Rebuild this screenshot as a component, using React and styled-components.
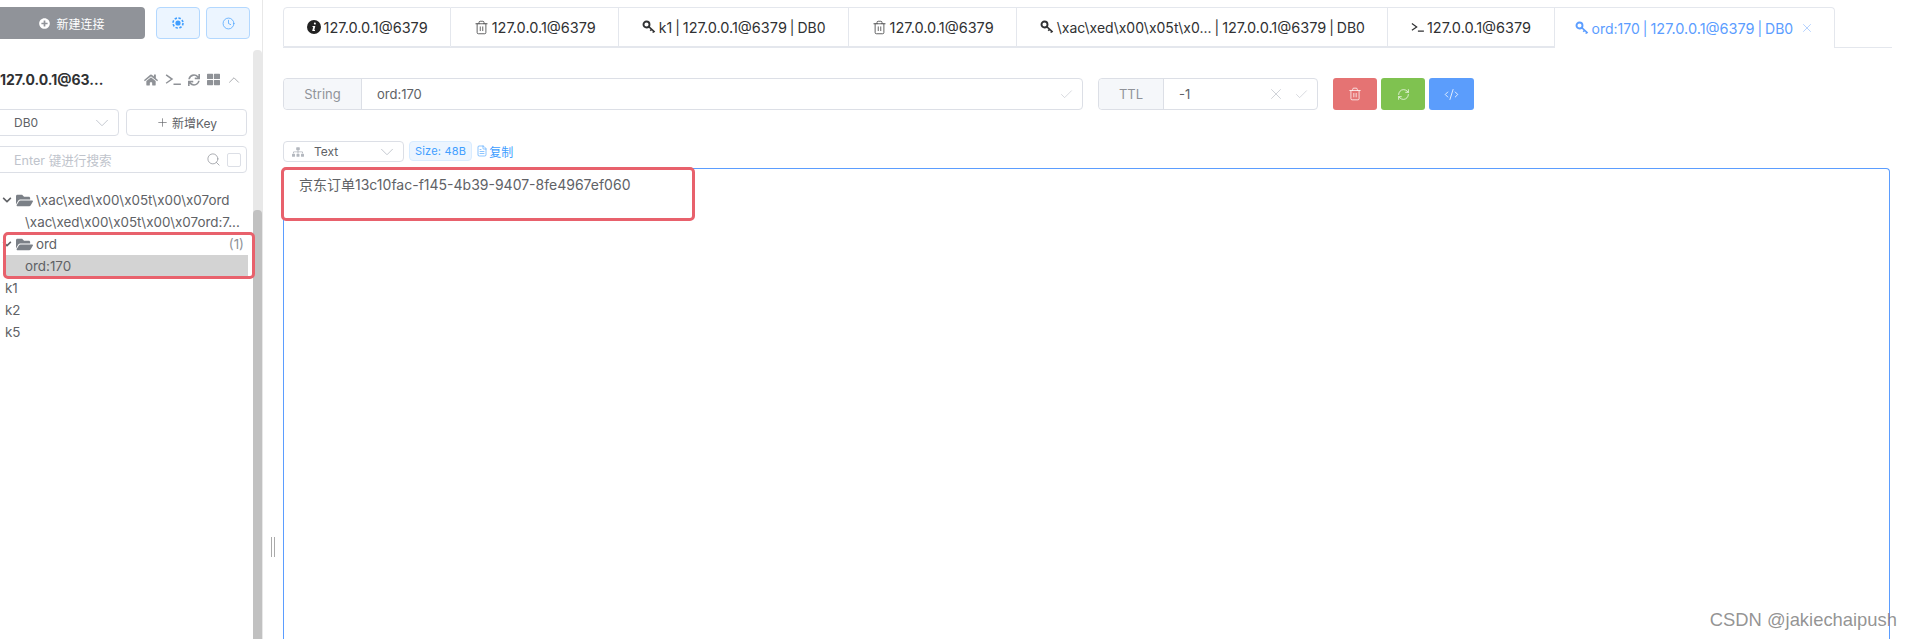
import React from 'react';
import styled, { createGlobalStyle } from 'styled-components';
import {
  FaHome, FaSync, FaThLarge, FaFolderOpen, FaChevronDown, FaPlusCircle, FaSitemap,
} from 'react-icons/fa';
import {
  Trash2, RefreshCw, Clock, ChevronDown, ChevronUp, Plus, Search, Check, X, CodeXml, FileText,
} from 'lucide-react';

const ADDRESS = '127.0.0.1@6379';

const GlobalStyle = createGlobalStyle`
  html, body {
    margin: 0;
    height: 100%;
    overflow: hidden;
    background: #fff;
  }
  #root {
    height: 100%;
  }
  * {
    box-sizing: border-box;
  }
`;

const Page = styled.div`
  position: relative;
  display: flex;
  height: 639px;
  overflow: hidden;
  font-family: Inter, "Noto Sans CJK SC", sans-serif;
  font-size: 13px;
  color: #606266;
`;

const Sidebar = styled.aside`
  width: 263px;
  flex: none;
  display: flex;
  flex-direction: column;
  border-right: 1px solid #e8e8e8;
`;

const TopButtons = styled.div`
  display: flex;
  gap: 6px;
  height: 50px;
  padding: 7px 0 0 0;
  margin-left: -10px;
`;

const NewConnection = styled.div`
  width: 155px;
  height: 32px;
  margin-right: 5px;
  padding-left: 9px;
  display: flex;
  align-items: center;
  justify-content: center;
  gap: 6px;
  border-radius: 4px;
  background: #909399;
  color: #fff;
  font-size: 12px;
`;

const LightButton = styled.div`
  width: 44px;
  height: 32px;
  display: flex;
  align-items: center;
  justify-content: center;
  border: 1px solid #b3d8ff;
  border-radius: 4px;
  background: #ecf5ff;
  color: #409eff;
`;

const SideBody = styled.div`
  flex: 1;
  min-height: 0;
  display: flex;
`;

const SideContent = styled.div`
  width: 253px;
  flex: none;
`;

const ScrollTrack = styled.div`
  width: 9px;
  flex: none;
  padding-top: 160px;
  background: #e8e8e8;
  border-radius: 4px 4px 0 0;
`;

const ScrollThumb = styled.div`
  height: 100%;
  background: #c1c1c1;
  border-radius: 4px 4px 0 0;
`;

const ConnectionRow = styled.div`
  height: 59px;
  display: flex;
  align-items: center;
  justify-content: space-between;
  padding-right: 10px;
`;

const ConnectionName = styled.div`
  font-size: 14px;
  font-weight: 700;
  color: #303133;
`;

const ConnectionIcons = styled.div`
  display: flex;
  align-items: center;
  gap: 7px;
  color: #8f9297;
`;

const CollapseIcon = styled(ChevronUp)`
  margin-left: -2px;
`;

const KeyToolbar = styled.div`
  display: flex;
  gap: 7px;
  padding-right: 6px;
`;

const DbSelect = styled.div`
  width: 129px;
  height: 27px;
  margin-left: -10px;
  padding: 0 5px 0 23px;
  display: flex;
  align-items: center;
  justify-content: space-between;
  border: 1px solid #dcdfe6;
  border-radius: 4px;
  font-size: 12px;
  color: #606266;
`;

const NewKey = styled.div`
  flex: 1;
  height: 27px;
  display: flex;
  align-items: center;
  justify-content: center;
  gap: 3px;
  border: 1px solid #dcdfe6;
  border-radius: 4px;
  font-size: 12px;
`;

const SearchBox = styled.div`
  height: 27px;
  margin: 10px 6px 0 -10px;
  padding: 0 5px 0 23px;
  display: flex;
  align-items: center;
  gap: 6px;
  border: 1px solid #dcdfe6;
  border-radius: 4px;
  font-size: 12.6px;
  color: #c0c4cc;
`;

const SearchHint = styled.span`
  flex: 1;
`;

const SearchCheck = styled.span`
  width: 14px;
  height: 14px;
  border: 1px solid #dcdfe6;
  border-radius: 2px;
`;

const Tree = styled.div`
  margin-top: 16px;
  font-size: 13.4px;
`;

const AnnotatedGroup = styled.div`
  position: relative;
`;

const Annotation = styled.div`
  position: absolute;
  border: 3px solid #e8616c;
  border-radius: 5px;
  pointer-events: none;
  left: ${p => p.$left}px;
  top: ${p => p.$top}px;
  width: ${p => p.$width}px;
  height: ${p => p.$height}px;
`;

const TreeRow = styled.div`
  height: 22px;
  margin-right: 5px;
  display: flex;
  align-items: center;
  gap: 3.5px;
  white-space: nowrap;
  padding-left: ${p => p.$indent}px;
  background: ${p => (p.$selected ? '#d3d3d3' : 'transparent')};
  margin-left: ${p => (p.$selected ? 6 : 0)}px;
`;

const TreeCount = styled.span`
  margin-left: auto;
  padding-right: 4px;
  color: #909399;
`;

const Splitter = styled.div`
  width: 20px;
  flex: none;
  display: flex;
  align-items: flex-end;
  justify-content: flex-start;
  gap: 2px;
  padding: 0 0 82px 8px;
`;

const SplitBar = styled.span`
  width: 1px;
  height: 20px;
  background: #aaa;
`;

const Main = styled.main`
  flex: 1;
  min-width: 0;
  padding: 7px 17px 0 0;
  display: flex;
  flex-direction: column;
`;

const TabStrip = styled.div`
  height: 41px;
  flex: none;
  display: flex;
  border-bottom: 1px solid #e4e7ed;
`;

const Tab = styled.div`
  height: ${p => (p.$active ? 41 : 40)}px;
  padding: 0 ${p => (p.$active ? 20 : 22.5)}px;
  display: flex;
  align-items: center;
  gap: 3px;
  white-space: pre;
  border: 1px solid #e4e7ed;
  border-left: ${p => (p.$first ? '1px solid #e4e7ed' : 'none')};
  border-bottom: ${p => (p.$active ? 'none' : '1px solid #e4e7ed')};
  border-radius: ${p => (p.$first ? '4px 0 0 0' : p.$active ? '0 4px 0 0' : '0')};
  background: #fff;
  font-size: 14px;
  word-spacing: -1px;
  color: ${p => (p.$active ? '#5b9dff' : '#303133')};
`;

const TabAddress = styled.span`
  font-size: 14.5px;
`;

const TabClose = styled.span`
  margin-left: 4px;
  display: flex;
  color: #7fb2ff;
`;

const KeyRow = styled.div`
  margin-top: 30px;
  height: 32px;
  flex: none;
  display: flex;
`;

const FieldGroup = styled.div`
  display: flex;
  height: 32px;
  border: 1px solid #dcdfe6;
  border-radius: 4px;
  width: ${p => p.$width}px;
  margin-right: ${p => p.$gap}px;
`;

const FieldLabel = styled.div`
  width: ${p => p.$width}px;
  flex: none;
  display: flex;
  align-items: center;
  justify-content: center;
  background: #f5f7fa;
  border-right: 1px solid #dcdfe6;
  border-radius: 4px 0 0 4px;
  color: #909399;
`;

const FieldValue = styled.div`
  flex: 1;
  padding: 0 8px 0 15px;
  display: flex;
  align-items: center;
  gap: 9px;
`;

const FieldText = styled.span`
  flex: 1;
`;

const ActionButton = styled.div`
  width: ${p => p.$width || 44}px;
  height: 32px;
  margin-right: 4px;
  display: flex;
  align-items: center;
  justify-content: center;
  border-radius: 3px;
  background: ${p => p.$color};
  color: #fff;
`;

const FormatRow = styled.div`
  margin-top: 31px;
  height: 21px;
  flex: none;
  display: flex;
  align-items: flex-start;
`;

const FormatSelect = styled.div`
  width: 121px;
  height: 21px;
  padding: 0 5px 0 8px;
  display: flex;
  align-items: center;
  border: 1px solid #dcdfe6;
  border-radius: 4px;
  font-size: 12px;
`;

const FormatName = styled.span`
  flex: 1;
  padding-left: 10px;
`;

const SizeTag = styled.div`
  height: 20px;
  margin-left: 5px;
  padding: 0 5px;
  display: flex;
  align-items: center;
  border: 1px solid #d9ecff;
  border-radius: 4px;
  background: #ecf5ff;
  color: #409eff;
  font-size: 11px;
  letter-spacing: 0.2px;
`;

const CopyLink = styled.div`
  margin-left: 4px;
  height: 20px;
  display: flex;
  align-items: center;
  gap: 1px;
  color: #409eff;
  font-size: 12px;
`;

const Editor = styled.div`
  position: relative;
  flex: 1;
  margin: 6px 2px 0 0;
  padding: 7px 15px;
  border: 1px solid #5b9dff;
  border-bottom: none;
  border-radius: 4px 4px 0 0;
  font-size: 14px;
  line-height: 18px;
`;

const Watermark = styled.div`
  position: absolute;
  right: 12px;
  bottom: 8px;
  font-family: "Liberation Sans", sans-serif;
  font-size: 18.4px;
  color: rgba(120, 120, 120, 0.8);
`;

const PromptIcon = ({ width }) => (
  <svg width={width} height={width * 0.8} viewBox="0 0 16 13" fill="none" stroke="currentColor" strokeWidth="1.5">
    <path d="M1 2l6 4.2L1 10.4M8.5 11.5H16" />
  </svg>
);

const KeyIcon = () => (
  <svg width="14" height="14" viewBox="0 0 14 14" fill="none" stroke="currentColor">
    <circle cx="4.5" cy="4.5" r="3" strokeWidth="1.9" />
    <path d="M6.7 6.7l6 5.3M9.6 9.2l-1.3 1.6M11.8 11.1l-1 1.5" strokeWidth="1.6" />
  </svg>
);

const InfoIcon = () => (
  <svg width="14" height="14" viewBox="0 0 14 14">
    <circle cx="7" cy="7" r="7" fill="#222" />
    <path d="M7.9 2.6a1 1 0 1 1-.1 2 1 1 0 0 1 .1-2zM5.6 6h2.7l-1 4h.8l-.2.9H5.2l1-4h-.8z" fill="#fff" />
  </svg>
);

const TabLabel = ({ label }) => {
  const [before, after] = label.split(ADDRESS);
  return (
    <span>
      {before}
      <TabAddress>{ADDRESS}</TabAddress>
      {after}
    </span>
  );
};

const Connection = () => (
  <ConnectionRow>
    <ConnectionName>127.0.0.1@63...</ConnectionName>
    <ConnectionIcons>
      <FaHome size={14} />
      <PromptIcon width={16} />
      <FaSync size={12} />
      <FaThLarge size={13} />
      <CollapseIcon size={18} strokeWidth={1} />
    </ConnectionIcons>
  </ConnectionRow>
);

const tabs = [
  { icon: <InfoIcon />, label: ADDRESS },
  { icon: <Trash2 size={15} strokeWidth={1.2} />, label: ADDRESS },
  { icon: <KeyIcon />, label: `k1 | ${ADDRESS} | DB0` },
  { icon: <Trash2 size={15} strokeWidth={1.2} />, label: ADDRESS },
  { icon: <KeyIcon />, label: `\\xac\\xed\\x00\\x05t\\x0... | ${ADDRESS} | DB0` },
  { icon: <PromptIcon width={13} />, label: ADDRESS },
];

const App = () => (
  <Page>
    <GlobalStyle />
    <Sidebar>
      <TopButtons>
        <NewConnection>
          <FaPlusCircle size={11} />
          新建连接
        </NewConnection>
        <LightButton>
          <svg width="14" height="14" viewBox="0 0 14 14">
            <circle cx="7" cy="7" r="2.6" fill="currentColor" />
            <circle cx="7" cy="7" r="5" fill="none" stroke="currentColor" strokeWidth="1.6" strokeDasharray="2.4 1.5" />
          </svg>
        </LightButton>
        <LightButton>
          <Clock size={13} strokeWidth={1.3} />
        </LightButton>
      </TopButtons>
      <SideBody>
        <SideContent>
          <Connection />
          <KeyToolbar>
            <DbSelect>
              DB0
              <ChevronDown size={22} strokeWidth={1} color="#c0c4cc" />
            </DbSelect>
            <NewKey>
              <Plus size={13} strokeWidth={1.2} />
              新增Key
            </NewKey>
          </KeyToolbar>
          <SearchBox>
            <SearchHint>Enter 键进行搜索</SearchHint>
            <Search size={15} strokeWidth={1.2} color="#909399" />
            <SearchCheck />
          </SearchBox>
          <Tree>
            <TreeRow $indent={2}>
              <FaChevronDown size={10} color="#606266" />
              <FaFolderOpen size={17} color="#7b8087" />
              {'\\xac\\xed\\x00\\x05t\\x00\\x07ord'}
            </TreeRow>
            <TreeRow $indent={25}>{'\\xac\\xed\\x00\\x05t\\x00\\x07ord:7...'}</TreeRow>
            <AnnotatedGroup>
              <TreeRow $indent={2}>
                <FaChevronDown size={10} color="#606266" />
                <FaFolderOpen size={17} color="#7b8087" />
                ord
                <TreeCount>(1)</TreeCount>
              </TreeRow>
              <TreeRow $indent={19} $selected>ord:170</TreeRow>
              <Annotation $left={3} $top={-1} $width={252} $height={47} />
            </AnnotatedGroup>
            <TreeRow $indent={5}>k1</TreeRow>
            <TreeRow $indent={5}>k2</TreeRow>
            <TreeRow $indent={5}>k5</TreeRow>
          </Tree>
        </SideContent>
        <ScrollTrack>
          <ScrollThumb />
        </ScrollTrack>
      </SideBody>
    </Sidebar>
    <Splitter>
      <SplitBar />
      <SplitBar />
    </Splitter>
    <Main>
      <TabStrip>
        {tabs.map((tab, i) => (
          <Tab key={i} $first={i === 0}>
            {tab.icon}
            <TabLabel label={tab.label} />
          </Tab>
        ))}
        <Tab $active>
          <KeyIcon />
          <TabLabel label={`ord:170 | ${ADDRESS} | DB0`} />
          <TabClose>
            <X size={14} strokeWidth={1} />
          </TabClose>
        </Tab>
      </TabStrip>
      <KeyRow>
        <FieldGroup $width={800} $gap={15}>
          <FieldLabel $width={78}>String</FieldLabel>
          <FieldValue>
            <FieldText>ord:170</FieldText>
            <Check size={15} strokeWidth={1} color="#c0c4cc" />
          </FieldValue>
        </FieldGroup>
        <FieldGroup $width={220} $gap={15}>
          <FieldLabel $width={65}>TTL</FieldLabel>
          <FieldValue>
            <FieldText>-1</FieldText>
            <X size={18} strokeWidth={1} color="#c0c4cc" />
            <Check size={15} strokeWidth={1} color="#c0c4cc" />
          </FieldValue>
        </FieldGroup>
        <ActionButton $color="#e57373">
          <Trash2 size={14} strokeWidth={1.3} />
        </ActionButton>
        <ActionButton $color="#7fc250">
          <RefreshCw size={13} strokeWidth={1.3} />
        </ActionButton>
        <ActionButton $color="#5b9dfc" $width={45}>
          <CodeXml size={15} strokeWidth={1.3} />
        </ActionButton>
      </KeyRow>
      <FormatRow>
        <FormatSelect>
          <FaSitemap size={12} color="#b4b8bf" />
          <FormatName>Text</FormatName>
          <ChevronDown size={22} strokeWidth={1} color="#c0c4cc" />
        </FormatSelect>
        <SizeTag>Size: 48B</SizeTag>
        <CopyLink>
          <FileText size={12} strokeWidth={1.2} />
          复制
        </CopyLink>
      </FormatRow>
      <Editor>
        京东订单13c10fac-f145-4b39-9407-8fe4967ef060
        <Annotation $left={-3} $top={-2} $width={414} $height={54} />
      </Editor>
    </Main>
    <Watermark>CSDN @jakiechaipush</Watermark>
  </Page>
);

export default App;
